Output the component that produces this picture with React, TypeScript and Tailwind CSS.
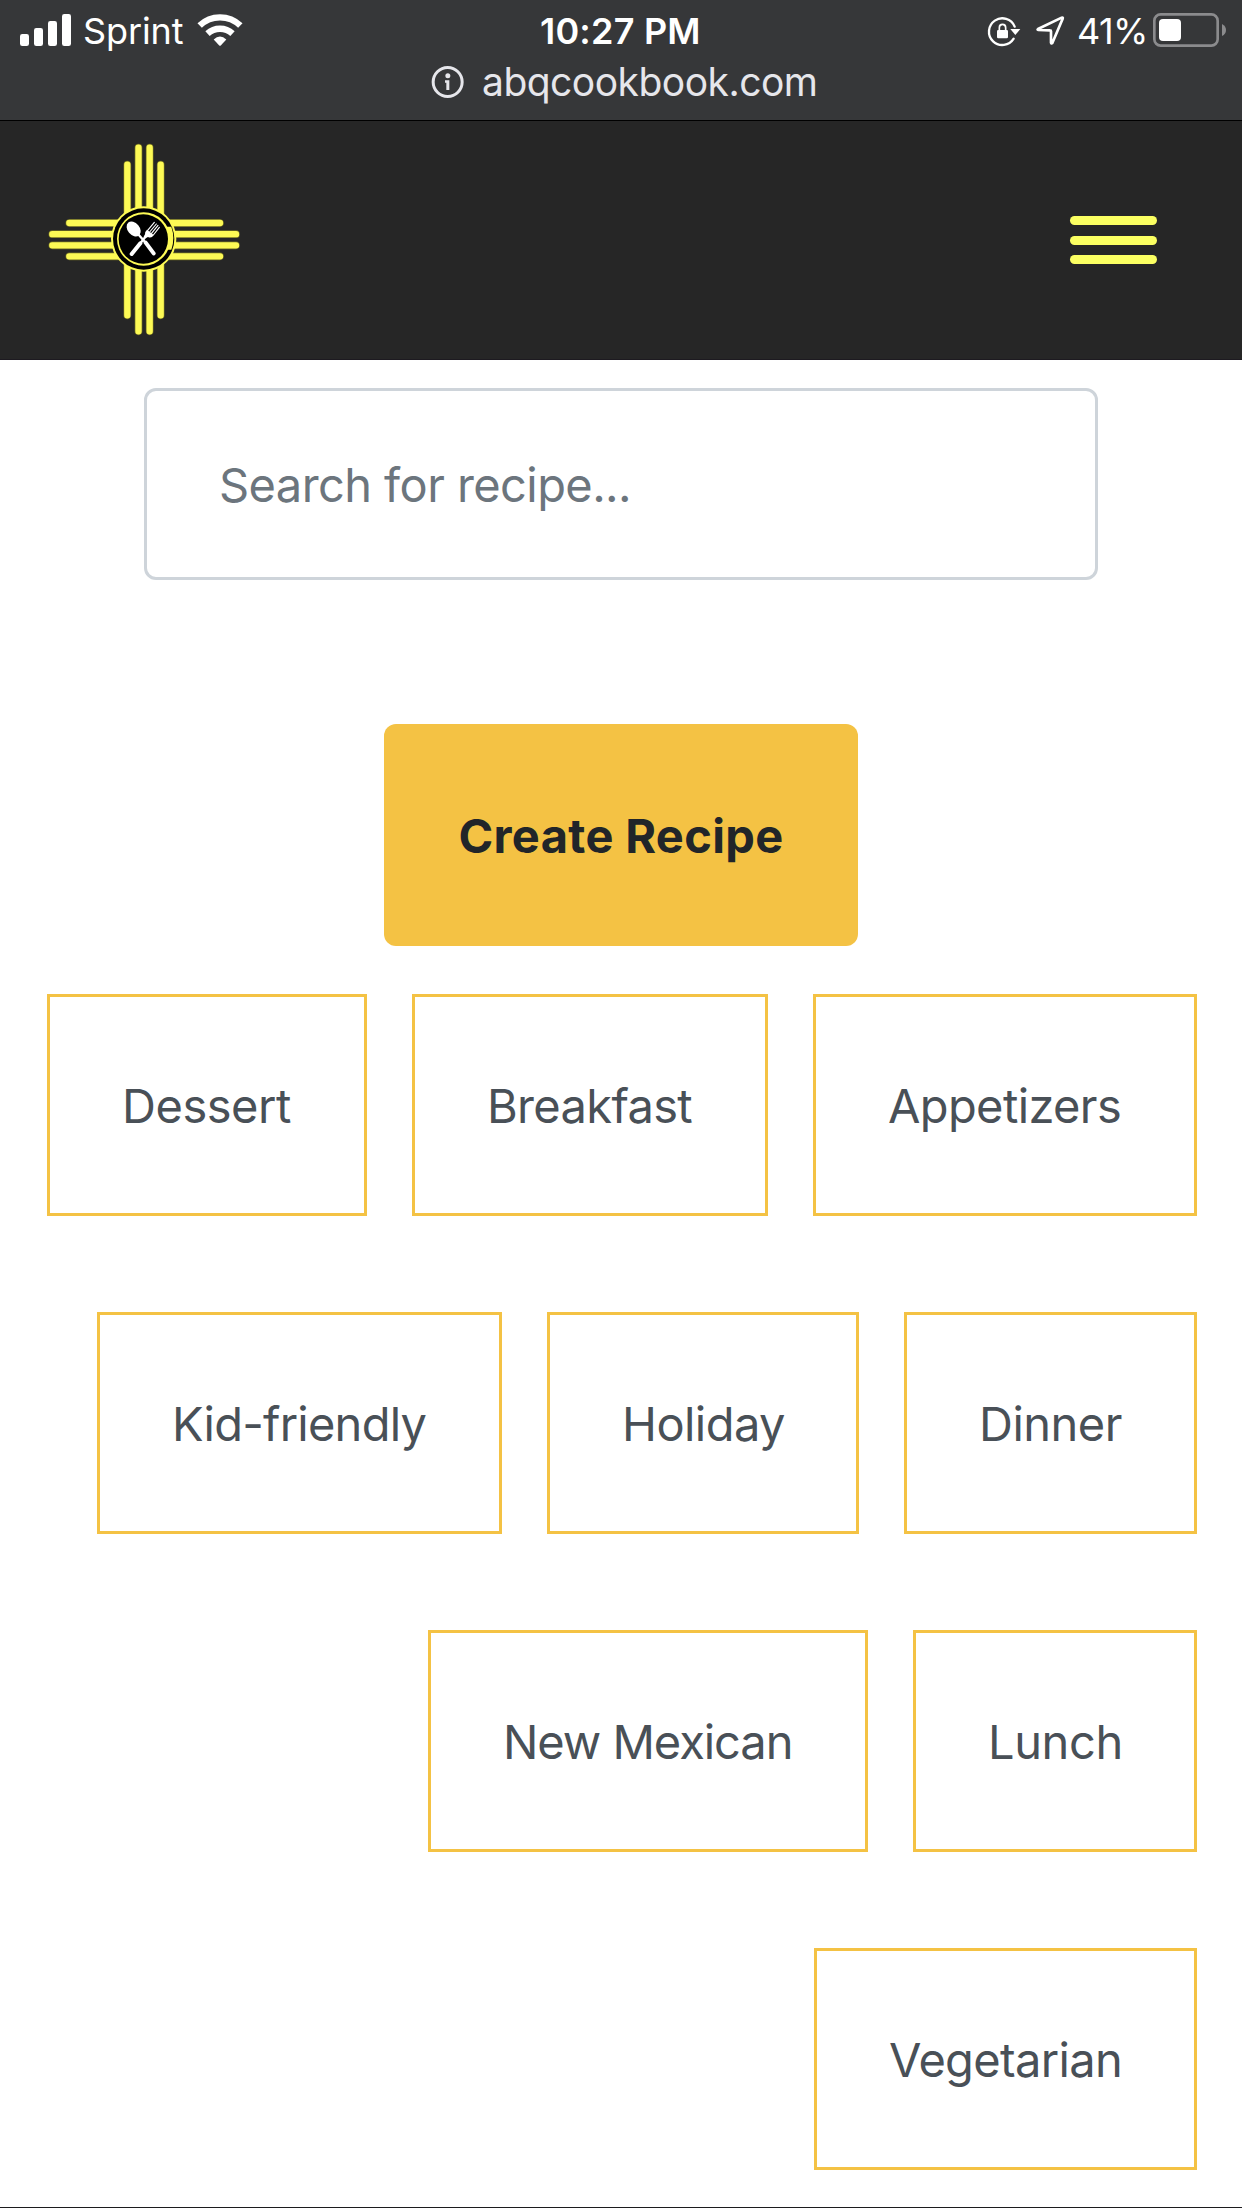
import React from "react";

type Tag = { label: string; box: string };

const rows: Tag[][] = [
  [
    { label: "Dessert", box: "w-[320px] tracking-[-0.46px]" },
    { label: "Breakfast", box: "w-[356px] tracking-[-0.66px]" },
    { label: "Appetizers", box: "w-[384px] tracking-[-0.62px]" },
  ],
  [
    { label: "Kid-friendly", box: "w-[405px] tracking-[-0.76px]" },
    { label: "Holiday", box: "w-[312px] tracking-[-0.55px]" },
    { label: "Dinner", box: "w-[293px] tracking-[-0.5px]" },
  ],
  [
    { label: "New Mexican", box: "w-[440px] tracking-[-1.05px]" },
    { label: "Lunch", box: "w-[284px] tracking-[-0.4px]" },
  ],
  [{ label: "Vegetarian", box: "w-[383px] tracking-[-0.66px]" }],
];

function Signal() {
  return (
    <svg width="74" height="62" viewBox="0 0 222 186" fill="#fff" className="shrink-0">
      <rect x="60" y="102" width="27" height="36" rx="7" />
      <rect x="102" y="84" width="27" height="54" rx="7" />
      <rect x="144" y="63" width="27" height="75" rx="7" />
      <rect x="186" y="42" width="27" height="96" rx="7" />
    </svg>
  );
}

function Wifi() {
  return (
    <svg width="50" height="62" viewBox="585 0 150 186" className="shrink-0">
      <g fill="none" stroke="#fff" strokeWidth="19">
        <path d="M599 76.500A88 88 0 0 1 721 76.500" />
        <path d="M622.500 101A55 55 0 0 1 697.500 101" />
      </g>
      <path d="M641 118.500Q660 101 679 118.500L663 136Q660 139 657 136Z" fill="#fff" />
    </svg>
  );
}

function LockAndLocation() {
  return (
    <svg width="85" height="62" viewBox="75 0 255 186" className="shrink-0">
      <path d="M164 80A40 40 0 1 0 161 116" fill="none" stroke="#fff" strokeWidth="7" strokeLinecap="round" />
      <path d="M151 87H181L166 105Z" fill="#fff" />
      <rect x="111" y="90" width="33" height="25" rx="4" fill="#fff" />
      <path d="M118 92V83Q118 73 127.500 73Q137 73 137 83V92" fill="none" stroke="#fff" strokeWidth="5" />
      <path d="M234 87L305 53Q310 51 308 56L277 129Q274 132 273 128V94Q273 91 270 91L235 90Q231 89 234 87Z" fill="none" stroke="#fff" strokeWidth="8" strokeLinejoin="round" />
    </svg>
  );
}

function Battery() {
  return (
    <svg width="80" height="62" viewBox="570 0 240 186" className="shrink-0">
      <rect x="583" y="43" width="190" height="94" rx="19" fill="none" stroke="#8b8b8d" strokeWidth="8" />
      <rect x="597" y="57" width="66" height="66" rx="12" fill="#fff" />
      <path d="M786 72Q798 78 798 90Q798 102 786 108Z" fill="#8b8b8d" />
    </svg>
  );
}

function Info() {
  return (
    <svg width="33" height="33" viewBox="0 0 99 99" className="shrink-0">
      <circle cx="50" cy="48" r="43.500" fill="none" stroke="#e6e6eb" strokeWidth="9" />
      <circle cx="50.500" cy="29" r="7.500" fill="#e6e6eb" />
      <path d="M42 43H55V72H46V50H42Z" fill="#e6e6eb" />
    </svg>
  );
}

function Rays() {
  return (
    <>
      <path d="M325.500 53V604M359 53V604" />
      <path d="M292 104V556M392 104V556" />
    </>
  );
}

function Logo() {
  return (
    <svg width="230" height="230" viewBox="0 0 690 690" className="ml-[30px] mt-[9px] shrink-0">
      <g fill="none" stroke="#6f6d22" strokeWidth="23" strokeLinecap="round">
        <Rays />
        <g transform="matrix(0 1 1 0 14 -13)"><Rays /></g>
      </g>
      <g fill="none" stroke="#fdfa55" strokeWidth="19" strokeLinecap="round">
        <Rays />
        <g transform="matrix(0 1 1 0 14 -13)"><Rays /></g>
      </g>
      <circle cx="341" cy="327" r="98" fill="#fdfa55" />
      <circle cx="341" cy="327" r="92" fill="#000" />
      <circle cx="341" cy="327" r="80" fill="#fdfa55" />
      <path d="M407 290L424 290Q436 325 424 359L407 359Z" fill="#fdfa55" />
      <circle cx="340" cy="327" r="74" fill="#000" />
      <g stroke="#fff" strokeLinecap="round" fill="none">
        <path d="M322 310L347 338" strokeWidth="7" />
        <path d="M347 338L371 370" strokeWidth="12" />
        <path d="M350 316L331 340" strokeWidth="7" />
        <path d="M331 340L305 372" strokeWidth="12" />
        <path d="M353 301L373 277M359 306L379 282M364 311L384 286M370 315L388 292" strokeWidth="3.500" />
      </g>
      <ellipse cx="311" cy="297" rx="18" ry="25" transform="rotate(-40 311 297)" fill="#fff" />
      <path d="M351 299L371 315Q365 326 354 321L346 325L341 320L345 313Q344 305 351 299Z" fill="#fff" />
    </svg>
  );
}

export default function App() {
  return (
    <div className="flex h-[2208px] w-[1242px] flex-col overflow-hidden border-b border-[#1c1c1e] bg-white font-['Inter',sans-serif] whitespace-nowrap">
      <div className="h-[121px] shrink-0 border-b border-black bg-[#363739] text-white">
        <div className="grid h-[62px] grid-cols-[539px_446px_1fr] text-[36px] leading-[62px]">
          <div className="flex">
            <Signal />
            <span className="ml-[9px] w-[112px] tracking-[-0.1px]">Sprint</span>
            <Wifi />
          </div>
          <div className="pl-px font-semibold tracking-[0.2px]">10:27 PM</div>
          <div className="flex">
            <LockAndLocation />
            <span className="ml-[7px] w-[73px] tracking-[-0.6px]">41%</span>
            <Battery />
          </div>
        </div>
        <div className="flex h-[40px] items-center pl-[431px] text-[#e6e6eb]">
          <Info />
          <span className="ml-[18px] text-[39px] leading-[40px] tracking-[-0.52px]">abqcookbook.com</span>
        </div>
      </div>

      <header className="flex h-[239px] shrink-0 justify-between border-b border-[#1d1a20] bg-[#262626]">
        <Logo />
        <button aria-label="Menu" className="mt-[95px] mr-[85px] flex h-[48px] w-[87px] flex-col justify-between">
          <span className="h-[9px] w-full rounded-full bg-[#fbff62]" />
          <span className="h-[9px] w-full rounded-full bg-[#fbff62]" />
          <span className="h-[9px] w-full rounded-full bg-[#fbff62]" />
        </button>
      </header>

      <main className="flex flex-col items-center text-[47px]">
        <input
          placeholder="Search for recipe..."
          className="mt-[28px] h-[192px] w-[954px] rounded-[12px] border-[3px] border-[#ced4da] bg-white px-[72px] tracking-[-0.58px] placeholder:text-[#6c757d] outline-none"
        />
        <button className="mt-[144px] h-[222px] w-[474px] rounded-[12px] bg-[#f4c244] pt-[2px] font-bold tracking-[0.35px] text-[#212529]">
          Create Recipe
        </button>
        <div className="mt-[48px] flex w-full flex-col gap-[96px] pr-[45px]">
          {rows.map((row, i) => (
            <div key={i} className="flex justify-end gap-[45px]">
              {row.map((tag) => (
                <button
                  key={tag.label}
                  className={`h-[222px] border-[3px] border-[#f4c244] bg-white pt-[2px] pl-[72px] text-left text-[#495057] ${tag.box}`}
                >
                  {tag.label}
                </button>
              ))}
            </div>
          ))}
        </div>
      </main>
    </div>
  );
}
